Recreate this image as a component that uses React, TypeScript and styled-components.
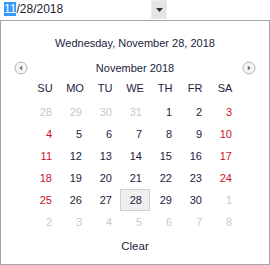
import React from "react";
import styled, { createGlobalStyle } from "styled-components";

const GlobalStyle = createGlobalStyle`
  html, body { margin: 0; padding: 0; background: #fff; }
  body { font-family: "Liberation Sans", Arial, sans-serif; }
`;

type Tone = "normal" | "weekend" | "muted";

interface Day {
  n: number;
  tone: Tone;
  selected?: boolean;
}

const weekdays = ["SU", "MO", "TU", "WE", "TH", "FR", "SA"];

function buildDays(): Day[] {
  const days: Day[] = [];
  [28, 29, 30, 31].forEach((n) => days.push({ n, tone: "muted" }));
  for (let n = 1; n <= 30; n++) {
    const col = days.length % 7;
    days.push({
      n,
      tone: col === 0 || col === 6 ? "weekend" : "normal",
      selected: n === 28,
    });
  }
  for (let n = 1; days.length < 42; n++) days.push({ n, tone: "muted" });
  return days;
}

function NavArrow({ dir }: { dir: "left" | "right" }) {
  return (
    <NavButton aria-label={dir === "left" ? "Previous month" : "Next month"}>
      <svg width="14" height="14" viewBox="0 0 14 14">
        <circle cx="7" cy="7" r="6" fill="#f4f4f4" stroke="#b4b4b8" />
        {dir === "left" ? (
          <path d="M8.2 4.5 L5.3 7 L8.2 9.5 Z" fill="#6e6e78" />
        ) : (
          <path d="M5.8 4.5 L8.7 7 L5.8 9.5 Z" fill="#6e6e78" />
        )}
      </svg>
    </NavButton>
  );
}

export default function App() {
  const days = buildDays();
  return (
    <>
      <GlobalStyle />
      <Wrapper>
        <Editor>
          <Input>
            <Selected>11</Selected>/28/2018
          </Input>
          <DropButton>
            <svg width="7" height="4" viewBox="0 0 7 4">
              <path d="M0 0 H7 L3.5 4 Z" fill="#333" />
            </svg>
          </DropButton>
        </Editor>
        <Popup>
          <LongDate>Wednesday, November 28, 2018</LongDate>
          <MonthBar>
            <NavArrow dir="left" />
            <MonthTitle>November 2018</MonthTitle>
            <NavArrow dir="right" />
          </MonthBar>
          <Grid>
            {weekdays.map((w) => (
              <HeadCell key={w}>{w}</HeadCell>
            ))}
          </Grid>
          <Grid>
            {days.map((d, i) => (
              <DayCell key={i} $tone={d.tone} $selected={!!d.selected && d.tone !== "muted"}>
                {d.n}
              </DayCell>
            ))}
          </Grid>
          <ClearButton>Clear</ClearButton>
        </Popup>
      </Wrapper>
    </>
  );
}

const Wrapper = styled.div`
  width: 270px;
  height: 265px;
  display: flex;
  flex-direction: column;
`;

const Editor = styled.div`
  display: flex;
  width: 167px;
  height: 20px;
`;

const Input = styled.div`
  flex: 1;
  padding-left: 4px;
  font-size: 12px;
  line-height: 19px;
  color: #1e1e32;
`;

const Selected = styled.span`
  background: #3399ff;
  color: #fff;
`;

const DropButton = styled.div`
  width: 16px;
  height: 19px;
  background: #e4e4e6;
  border: 1px solid #ececee;
  box-sizing: border-box;
  display: flex;
  align-items: center;
  justify-content: center;
`;

const Popup = styled.div`
  flex: 1;
  border: 1px solid #a4a4ac;
  box-sizing: border-box;
  display: flex;
  flex-direction: column;
  align-items: center;
  color: #232340;
  font-size: 11px;
`;

const LongDate = styled.div`
  margin-top: 14px;
  height: 16px;
  line-height: 16px;
`;

const MonthBar = styled.div`
  width: 100%;
  box-sizing: border-box;
  padding: 0 13px;
  margin-top: 9px;
  display: flex;
  align-items: center;
  justify-content: space-between;
  height: 16px;
`;

const NavButton = styled.div`
  width: 14px;
  height: 14px;
  display: flex;
`;

const MonthTitle = styled.div`
  line-height: 16px;
`;

const Grid = styled.div`
  display: grid;
  grid-template-columns: repeat(7, 30px);
`;

const HeadCell = styled.div`
  height: 22px;
  line-height: 22px;
  text-align: center;
  margin-top: 1px;
  margin-bottom: 2px;
`;

const toneColor: Record<Tone, string> = {
  normal: "#232340",
  weekend: "#cc1028",
  muted: "#c8c8cc",
};

const DayCell = styled.div<{ $tone: Tone; $selected: boolean }>`
  height: 22px;
  line-height: 20px;
  box-sizing: border-box;
  text-align: right;
  padding-right: 7px;
  color: ${(p) => toneColor[p.$tone]};
  background: ${(p) => (p.$selected ? "#efefef" : "transparent")};
  border: 1px solid ${(p) => (p.$selected ? "#d0d0d4" : "transparent")};
`;

const ClearButton = styled.div`
  margin-top: 5px;
  line-height: 16px;
  font-size: 11.5px;
`;
